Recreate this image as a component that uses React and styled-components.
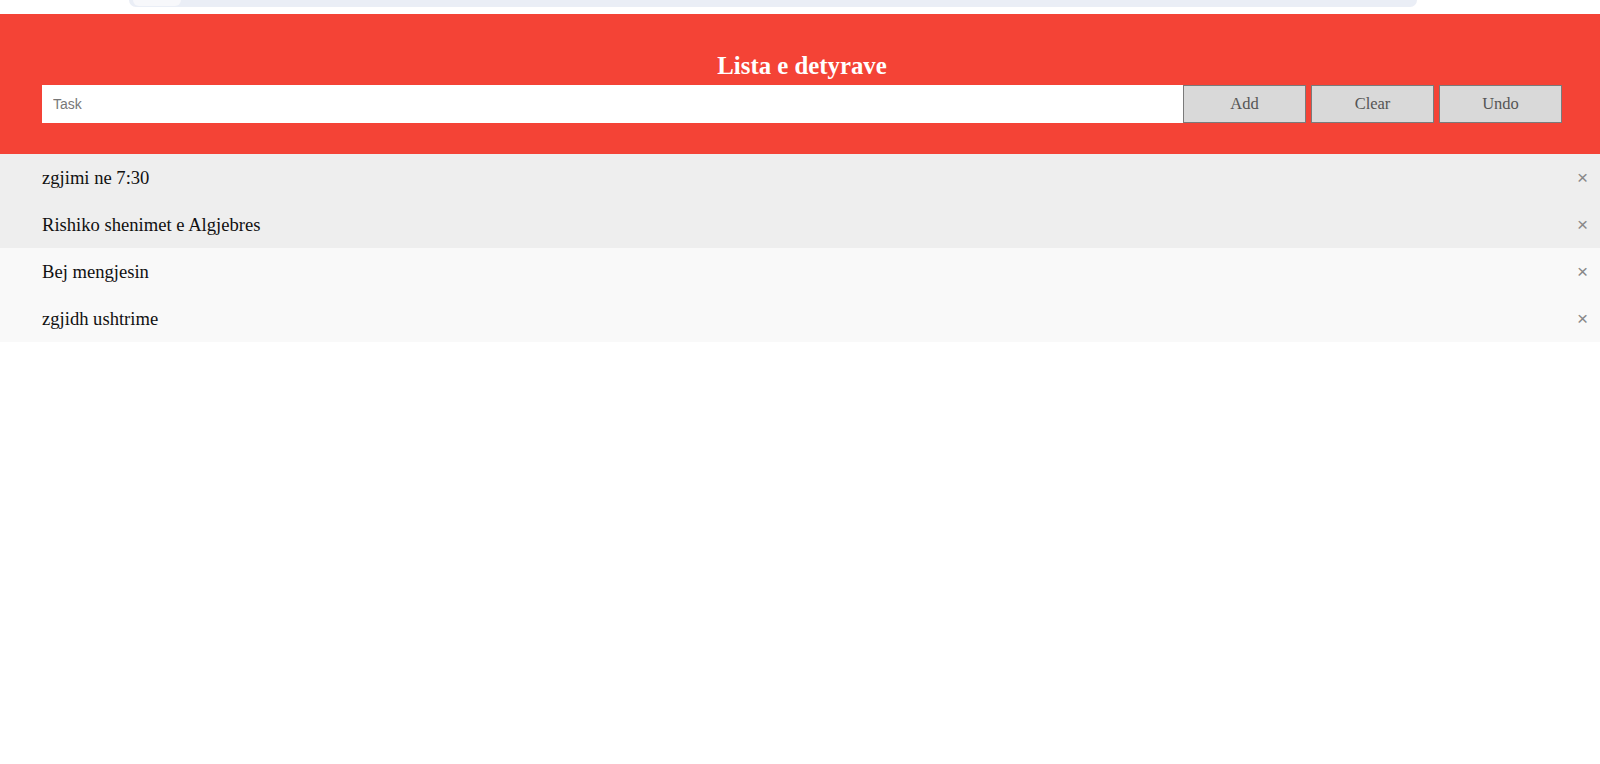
import React, { useState } from 'react';
import styled, { createGlobalStyle } from 'styled-components';

const GlobalStyle = createGlobalStyle`
  * { box-sizing: border-box; }
  body {
    margin: 0;
    background: #fff;
    font-family: "Liberation Serif", "Times New Roman", serif;
  }
`;

const initialTasks = [
  { text: 'zgjimi ne 7:30', shade: 'dark' },
  { text: 'Rishiko shenimet e Algjebres', shade: 'dark' },
  { text: 'Bej mengjesin', shade: 'light' },
  { text: 'zgjidh ushtrime', shade: 'light' },
];

function App() {
  const [tasks, setTasks] = useState(initialTasks);

  return (
    <>
      <GlobalStyle />
      <TopStrip>
        <AddressBar>
          <AddressTab />
        </AddressBar>
      </TopStrip>
      <Header>
        <Title>Lista e detyrave</Title>
        <InputRow>
          <TaskInput placeholder='Task' />
          <ActionBtn type='button'>Add</ActionBtn>
          <ActionBtn type='button'>Clear</ActionBtn>
          <ActionBtn type='button'>Undo</ActionBtn>
        </InputRow>
      </Header>
      <TaskList>
        {tasks.map((task, i) => (
          <TaskItem key={task.text} $shade={task.shade}>
            {task.text}
            <Close onClick={() => setTasks(tasks.filter((_, j) => j !== i))}>
              {'\u00D7'}
            </Close>
          </TaskItem>
        ))}
      </TaskList>
    </>
  );
}

const TopStrip = styled.div`
  height: 14px;
  background: #fff;
  padding: 0 183px 0 129px;
`;

const AddressBar = styled.div`
  height: 7px;
  background: #eaeef6;
  border-radius: 0 0 10px 10px;
  display: flex;
`;

const AddressTab = styled.div`
  width: 48px;
  height: 6px;
  margin-left: 4px;
  background: #f7f8fb;
  border-radius: 0 0 6px 6px;
`;

const Header = styled.header`
  background: #f44336;
  padding: 37px 38px 31px 42px;
  display: flex;
  flex-direction: column;
  align-items: center;
`;

const Title = styled.h2`
  margin: 0 0 5px;
  color: #fff;
  font-size: 24.8px;
  line-height: 29px;
  font-weight: bold;
`;

const InputRow = styled.div`
  width: 100%;
  display: flex;
  gap: 5px;
`;

const TaskInput = styled.input`
  flex: 1;
  height: 38px;
  margin: 0 -5px 0 0;
  border: none;
  border-radius: 0;
  padding: 0 11px;
  font-family: "Liberation Sans", Arial, sans-serif;
  font-size: 14px;
  background: #fff;
  outline: none;
  &::placeholder {
    color: #777;
  }
`;

const ActionBtn = styled.button`
  width: 123px;
  height: 38px;
  background: #d9d9d9;
  color: #555;
  border: 1.5px solid #7a7a7a;
  border-radius: 0;
  font-family: "Liberation Serif", "Times New Roman", serif;
  font-size: 16.5px;
  cursor: pointer;
  padding: 0;
`;

const TaskList = styled.ul`
  margin: 0;
  padding: 0;
  list-style: none;
`;

const TaskItem = styled.li`
  position: relative;
  height: 47px;
  display: flex;
  align-items: center;
  padding: 0 40px 0 42px;
  font-size: 18.6px;
  color: #111;
  background: ${p => (p.$shade === 'dark' ? '#eeeeee' : '#f9f9f9')};
`;

const Close = styled.span`
  position: absolute;
  right: 12px;
  top: 50%;
  transform: translateY(-50%);
  font-family: "Liberation Sans", Arial, sans-serif;
  font-size: 19px;
  color: #888;
  cursor: pointer;
`;

export default App;
